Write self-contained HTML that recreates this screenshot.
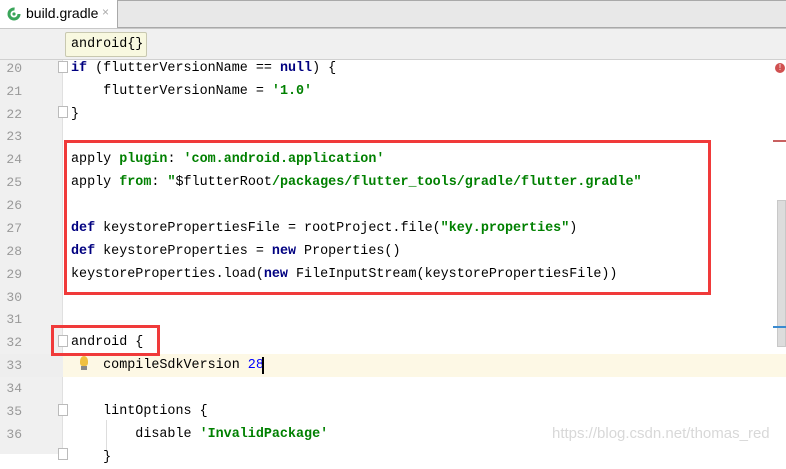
<!DOCTYPE html>
<html><head><style>
*{margin:0;padding:0;box-sizing:border-box}
body{width:786px;height:454px;overflow:hidden;background:#fff;position:relative;font-family:"Liberation Mono","Noto Sans CJK SC",monospace;font-size:13.4px}
.abs{position:absolute}
.tabbar{left:0;top:0;width:786px;height:28px;background:#e8e8e8;border-bottom:1px solid #a9a9a9;border-top:1px solid #a9a9a9}
.tab{left:0;top:0;width:118px;height:28px;background:#fff;border-right:1px solid #a9a9a9;font-family:"Liberation Sans",sans-serif;font-size:14px;color:#000}
.crumb{left:0;top:28px;width:786px;height:32px;background:#f0f0f0;border-top:1px solid #c8c8c8;border-bottom:1px solid #d0d0d0}
.gutter{left:0;top:60px;width:63px;height:394px;background:#f0f0f0;border-right:1px solid #e0e0e0}
.ln{left:0;width:22px;text-align:right;color:#999;font-size:13px;height:23px;line-height:23px}
.cl{left:71px;height:23px;line-height:23px;white-space:pre;color:#000}
.k{color:#000080;font-weight:bold}
.s{color:#008000;font-weight:bold}
.n{color:#0000ff}
.fold{width:10px;height:12px;border:1px solid #bbb;background:#fff;left:58px}
</style></head><body>
<div class="abs tabbar"></div>
<div class="abs tab"><svg class="abs" style="left:7px;top:7px" width="14" height="14" viewBox="0 0 14 14"><circle cx="7" cy="7" r="5" fill="none" stroke="#3aa55a" stroke-width="3" stroke-dasharray="24 8"/><circle cx="7" cy="7" r="1.6" fill="#3aa55a"/></svg><span class="abs" style="left:26px;top:5px">build.gradle</span><span class="abs" style="left:102px;top:5px;color:#aaa;font-size:12px">×</span></div>
<div class="abs crumb"></div>
<div class="abs" style="left:65px;top:32px;width:82px;height:25px;background:#f8f8e0;border:1px solid #c8c8b0;border-radius:2px;font-size:13.4px;line-height:23px;padding-left:5px">android{}</div>
<div class="abs gutter"></div>
<div class="abs" style="left:0;top:354px;width:786px;height:23px;background:#fdf8e5"></div>
<div class="abs" style="left:0;top:354px;width:63px;height:23px;background:#eeeeee"></div>
<div class="abs" style="left:777px;top:200px;width:9px;height:147px;background:#dcdcdc;border:1px solid #c8c8c8"></div>
<div class="abs" style="left:773px;top:140px;width:13px;height:2px;background:#c86060"></div>
<div class="abs" style="left:773px;top:326px;width:13px;height:2px;background:#3b8bd0"></div>
<div class="abs" style="left:775px;top:63px;width:10px;height:10px;border-radius:50%;background:#d05050;color:#fff;font-size:8px;line-height:10px;text-align:center;font-family:'Liberation Sans'">!</div>

<div class="abs ln" style="top:57px">20</div>
<div class="abs ln" style="top:80px">21</div>
<div class="abs ln" style="top:103px">22</div>
<div class="abs ln" style="top:125px">23</div>
<div class="abs ln" style="top:148px">24</div>
<div class="abs ln" style="top:171px">25</div>
<div class="abs ln" style="top:194px">26</div>
<div class="abs ln" style="top:217px">27</div>
<div class="abs ln" style="top:240px">28</div>
<div class="abs ln" style="top:263px">29</div>
<div class="abs ln" style="top:286px">30</div>
<div class="abs ln" style="top:308px">31</div>
<div class="abs ln" style="top:331px">32</div>
<div class="abs ln" style="top:354px">33</div>
<div class="abs ln" style="top:377px">34</div>
<div class="abs ln" style="top:400px">35</div>
<div class="abs ln" style="top:423px">36</div>

<div class="abs fold" style="top:61px"></div>
<div class="abs fold" style="top:106px"></div>
<div class="abs fold" style="top:335px"></div>
<div class="abs fold" style="top:404px"></div>
<div class="abs fold" style="top:448px"></div>
<div class="abs" style="left:106px;top:420px;width:1px;height:30px;background:#ddd"></div>

<div class="abs cl" style="top:57px"><span class="k">if</span> (flutterVersionName == <span class="k">null</span>) {</div>
<div class="abs cl" style="top:80px">    flutterVersionName = <span class="s">'1.0'</span></div>
<div class="abs cl" style="top:103px">}</div>
<div class="abs cl" style="top:148px">apply <span class="s">plugin</span>: <span class="s">'com.android.application'</span></div>
<div class="abs cl" style="top:171px">apply <span class="s">from</span>: <span class="s">"</span>$flutterRoot<span class="s">/packages/flutter_tools/gradle/flutter.gradle"</span></div>
<div class="abs cl" style="top:217px"><span class="k">def</span> keystorePropertiesFile = rootProject.file(<span class="s">"key.properties"</span>)</div>
<div class="abs cl" style="top:240px"><span class="k">def</span> keystoreProperties = <span class="k">new</span> Properties()</div>
<div class="abs cl" style="top:263px">keystoreProperties.load(<span class="k">new</span> FileInputStream(keystorePropertiesFile))</div>
<div class="abs cl" style="top:331px">android {</div>
<div class="abs cl" style="top:354px">    compileSdkVersion <span class="n">28</span></div>
<div class="abs" style="left:262px;top:357px;width:2px;height:17px;background:#000"></div>
<div class="abs" style="left:80px;top:356px;width:8px;height:10px;border-radius:50% 50% 30% 30%;background:#f0c040"></div>
<div class="abs" style="left:81px;top:366px;width:6px;height:4px;background:#888"></div>
<div class="abs cl" style="top:400px">    lintOptions {</div>
<div class="abs cl" style="top:423px">        disable <span class="s">'InvalidPackage'</span></div>
<div class="abs cl" style="top:446px">    }</div>

<div class="abs" style="left:64px;top:140px;width:647px;height:155px;border:3px solid #f03a3a"></div>
<div class="abs" style="left:51px;top:325px;width:109px;height:31px;border:3px solid #f03a3a"></div>
<div class="abs" style="left:552px;top:425px;font-family:'Liberation Sans',sans-serif;font-size:15px;color:#d8d8d8">https://blog.csdn.net/thomas_red</div>
</body></html>
